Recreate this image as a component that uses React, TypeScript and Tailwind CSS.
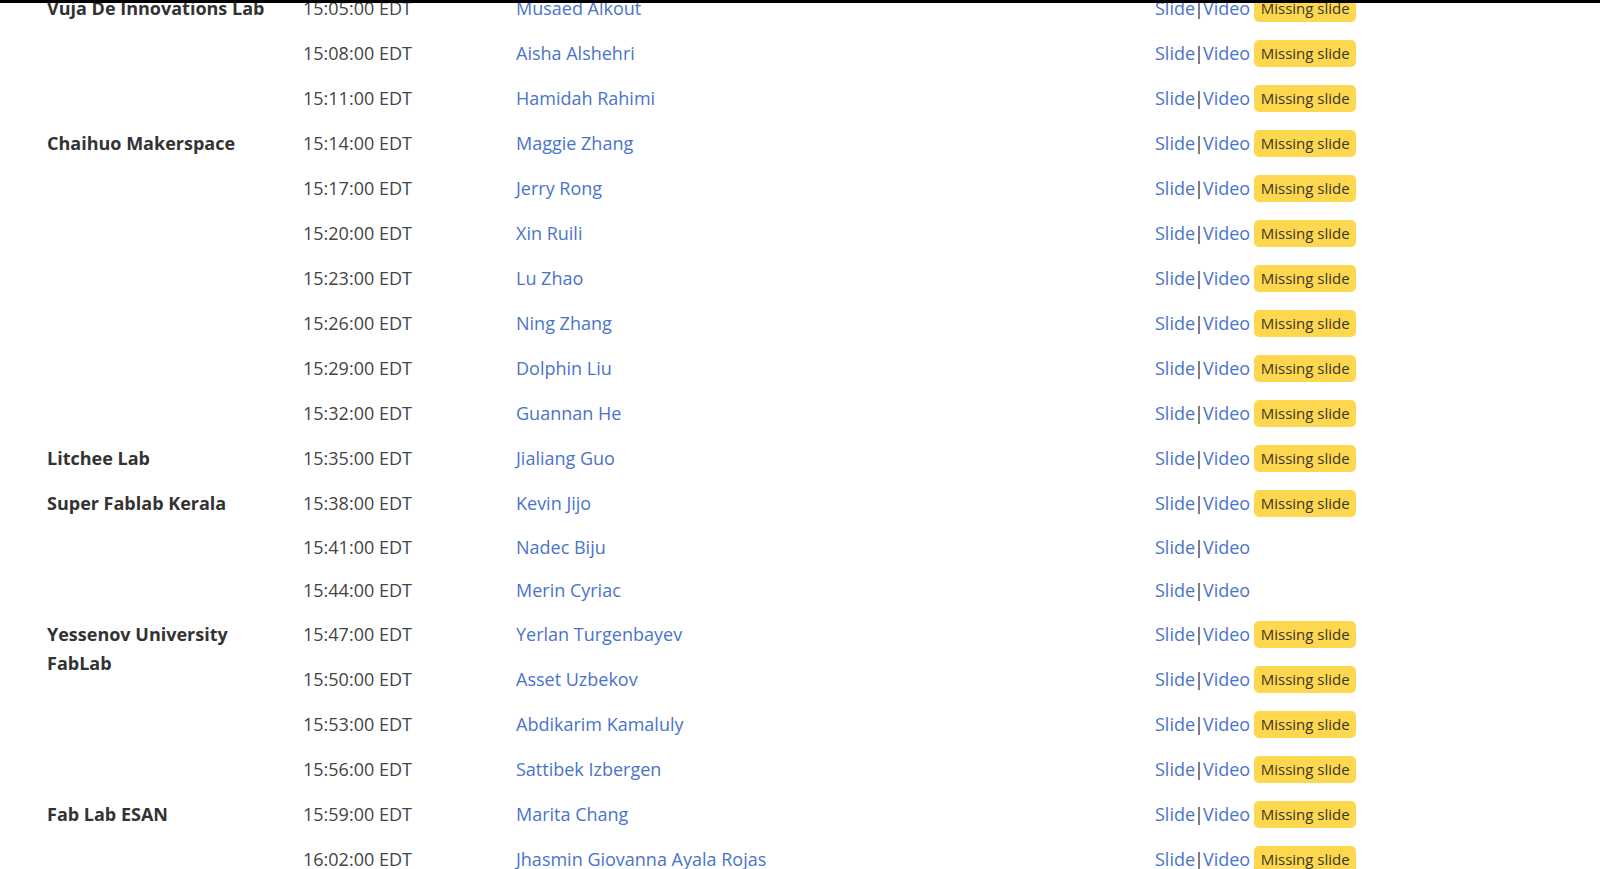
import React from "react";

type Talk = { time: string; name: string; missing: boolean };
type Lab = { lab: string; talks: Talk[] };

const schedule: Lab[] = [
  {
    lab: "Vuja De Innovations Lab",
    talks: [
      { time: "15:05:00 EDT", name: "Musaed Alkout", missing: true },
      { time: "15:08:00 EDT", name: "Aisha Alshehri", missing: true },
      { time: "15:11:00 EDT", name: "Hamidah Rahimi", missing: true },
    ],
  },
  {
    lab: "Chaihuo Makerspace",
    talks: [
      { time: "15:14:00 EDT", name: "Maggie Zhang", missing: true },
      { time: "15:17:00 EDT", name: "Jerry Rong", missing: true },
      { time: "15:20:00 EDT", name: "Xin Ruili", missing: true },
      { time: "15:23:00 EDT", name: "Lu Zhao", missing: true },
      { time: "15:26:00 EDT", name: "Ning Zhang", missing: true },
      { time: "15:29:00 EDT", name: "Dolphin Liu", missing: true },
      { time: "15:32:00 EDT", name: "Guannan He", missing: true },
    ],
  },
  {
    lab: "Litchee Lab",
    talks: [{ time: "15:35:00 EDT", name: "Jialiang Guo", missing: true }],
  },
  {
    lab: "Super Fablab Kerala",
    talks: [
      { time: "15:38:00 EDT", name: "Kevin Jijo", missing: true },
      { time: "15:41:00 EDT", name: "Nadec Biju", missing: false },
      { time: "15:44:00 EDT", name: "Merin Cyriac", missing: false },
    ],
  },
  {
    lab: "Yessenov University FabLab",
    talks: [
      { time: "15:47:00 EDT", name: "Yerlan Turgenbayev", missing: true },
      { time: "15:50:00 EDT", name: "Asset Uzbekov", missing: true },
      { time: "15:53:00 EDT", name: "Abdikarim Kamaluly", missing: true },
      { time: "15:56:00 EDT", name: "Sattibek Izbergen", missing: true },
    ],
  },
  {
    lab: "Fab Lab ESAN",
    talks: [
      { time: "15:59:00 EDT", name: "Marita Chang", missing: true },
      { time: "16:02:00 EDT", name: "Jhasmin Giovanna Ayala Rojas", missing: true },
    ],
  },
];

function TalkRow({ talk }: { talk: Talk }) {
  return (
    <div className={`flex items-center ${talk.missing ? "h-[45px]" : "h-[43px]"}`}>
      <div className="w-[213px] shrink-0 text-[#444]">{talk.time}</div>
      <div className="w-[639px] shrink-0">
        <a href="#" className="text-[#4a74c9]">
          {talk.name}
        </a>
      </div>
      <div className="flex items-center">
        <a href="#" className="text-[#4a74c9]">Slide</a>
        <span className="-mx-[1px] text-[#333]">|</span>
        <a href="#" className="text-[#4a74c9]">Video</a>
        {talk.missing && (
          <span className="ml-[4px] inline-flex h-[27px] w-[102px] items-center justify-center rounded-[5px] bg-[#fdd84f] text-[15px] text-[#3a3626]">
            Missing slide
          </span>
        )}
      </div>
    </div>
  );
}

export default function App() {
  return (
    <div
      className="relative h-[869px] overflow-hidden bg-white text-[18px] leading-[28.6px]"
      style={{ fontFamily: '"Open Sans", "Noto Sans", sans-serif' }}
    >
      <div className="absolute inset-x-0 top-0 z-10 h-[3px] bg-black" />
      <div className="-mt-[14px] pl-[47px]">
        {schedule.map((g) => (
          <div key={g.lab} className="flex">
            <div className="w-[256px] shrink-0 pt-[8px] pr-[24px] font-bold text-[#333]">
              {g.lab}
            </div>
            <div>
              {g.talks.map((t) => (
                <TalkRow key={t.time} talk={t} />
              ))}
            </div>
          </div>
        ))}
      </div>
    </div>
  );
}
